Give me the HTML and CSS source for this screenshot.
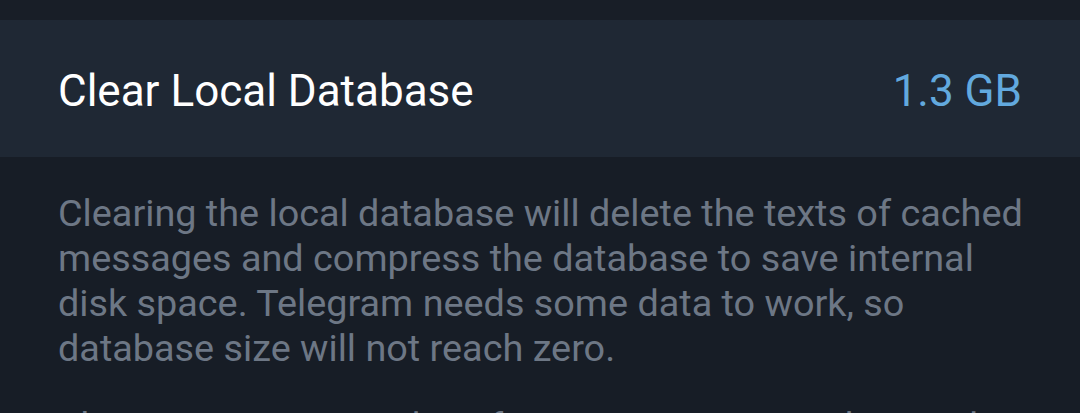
FILE: index.html
```html
<!DOCTYPE html>
<html>
<head>
<meta charset="utf-8">
<link rel="stylesheet" href="styles.css">
</head>
<body>
<div class="screen">
  <div class="top-gap"></div>
  <div class="row">
    <span class="row-title">Clear Local Database</span>
    <span class="row-value">1.3 GB</span>
  </div>
  <div class="info">
    <p class="info-text">Clearing the local database will delete the texts of cached messages and compress the database to save internal disk space. Telegram needs some data to work, so database size will not reach zero.</p>
    <p class="info-text">This operation can take a few minutes to complete and may require restart.</p>
  </div>
</div>
</body>
</html>
```
FILE: styles.css
```css
html, body {
  margin: 0;
  padding: 0;
  background: #171d26;
}
.screen {
  width: 1080px;
  height: 413px;
  overflow: hidden;
  font-family: Roboto, "Noto Sans", sans-serif;
}
.top-gap {
  height: 20px;
  background: #181e27;
}
.row {
  height: 137px;
  background: #1f2834;
  display: flex;
  align-items: center;
  justify-content: space-between;
  padding: 4px 58px 0 58px;
  box-sizing: border-box;
}
.row-title {
  color: #ffffff;
  font-size: 44px;
}
.row-value {
  color: #62a9de;
  font-size: 44px;
}
.info {
  padding: 34px 45px 0 58px;
}
.info-text {
  margin: 0 0 33px 0;
  color: #6d7785;
  font-size: 37.8px;
  line-height: 45px;
}
```
